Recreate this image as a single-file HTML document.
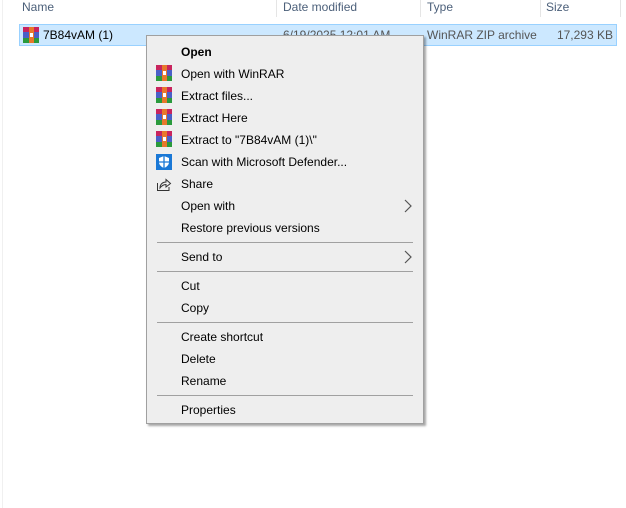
<!DOCTYPE html>
<html><head><meta charset="utf-8"><style>
body{margin:0;width:626px;height:508px;background:#fff;position:relative;overflow:hidden;font-family:"Liberation Sans",sans-serif;font-size:12px;color:#000}
.a{position:absolute;white-space:nowrap}
.h{color:#4c607a;top:0}
.vs{position:absolute;top:0;width:1px;height:17px;background:#e5e5e5}
.rar{position:absolute;width:16px;height:16px}
.rar i{position:absolute;left:0;width:16px;display:block}
.menu{position:absolute;left:146px;top:35px;width:278px;height:389px;background:#eeeeee;border:1px solid #a0a0a0;box-shadow:2px 2px 2px rgba(0,0,0,.35);box-sizing:border-box}
.it{position:absolute;left:34px;white-space:nowrap;line-height:16px}
.sep{position:absolute;left:10px;width:256px;height:1px;background:#a0a0a0}
.arr{position:absolute;left:256px}
</style></head><body>
<div style="position:absolute;left:2px;top:0;width:1px;height:508px;background:#f0f0f0"></div>
<div class="a h" style="left:22px">Name</div>
<div class="vs" style="left:276px"></div>
<div class="a h" style="left:283px">Date modified</div>
<div class="vs" style="left:420px"></div>
<div class="a h" style="left:427px">Type</div>
<div class="vs" style="left:540px"></div>
<div class="a h" style="left:546px">Size</div>
<div class="vs" style="left:620px"></div>
<div style="position:absolute;left:19px;top:24px;width:598px;height:22px;background:#cce8ff;border:1px solid #99d1ff;box-sizing:border-box"></div>
<div class="rar" style="left:23px;top:27px"><i style="top:0;height:5px;background:#c8245e"></i><i style="top:5px;height:6px;background:#4a5fc7"></i><i style="top:11px;height:5px;background:#2a9a3c"></i><i style="left:6px;width:5px;top:0;height:16px;background:#e8782c"></i><i style="left:7px;width:3px;top:6px;height:4px;background:#fff"></i></div>
<div class="a" style="left:43px;top:28px">7B84vAM (1)</div>
<div class="a" style="left:283px;top:28px;color:#555">6/19/2025 12:01 AM</div>
<div class="a" style="left:427px;top:28px;color:#555">WinRAR ZIP archive</div>
<div class="a" style="right:13px;top:28px;color:#555">17,293 KB</div>
<div class="menu">
<div class="it" style="top:8px;font-weight:bold">Open</div>
<div class="it" style="top:30px">Open with WinRAR</div>
<div class="it" style="top:52px">Extract files...</div>
<div class="it" style="top:74px">Extract Here</div>
<div class="it" style="top:96px">Extract to "7B84vAM (1)\"</div>
<div class="it" style="top:118px">Scan with Microsoft Defender...</div>
<div class="it" style="top:140px">Share</div>
<div class="it" style="top:162px">Open with</div>
<div class="it" style="top:184px">Restore previous versions</div>
<div class="sep" style="top:206px"></div>
<div class="it" style="top:213px">Send to</div>
<div class="sep" style="top:235px"></div>
<div class="it" style="top:242px">Cut</div>
<div class="it" style="top:264px">Copy</div>
<div class="sep" style="top:286px"></div>
<div class="it" style="top:293px">Create shortcut</div>
<div class="it" style="top:315px">Delete</div>
<div class="it" style="top:337px">Rename</div>
<div class="sep" style="top:359px"></div>
<div class="it" style="top:366px">Properties</div>
<svg class="arr" style="top:163px" width="10" height="14"><path d="M2 1L8 7L2 13" fill="none" stroke="#555" stroke-width="1.2"/></svg>
<svg class="arr" style="top:214px" width="10" height="14"><path d="M2 1L8 7L2 13" fill="none" stroke="#555" stroke-width="1.2"/></svg>
<svg style="position:absolute;left:9px;top:118px" width="16" height="16"><rect width="16" height="16" fill="#1a78d6"/><path d="M8 2L13 4V8C13 11 10.5 13 8 14C5.5 13 3 11 3 8V4Z" fill="#fff"/><path d="M8 2V14M3 8H13" stroke="#1a78d6" stroke-width="1.3"/></svg>
<svg style="position:absolute;left:9px;top:140px" width="16" height="16"><path d="M1.5 7V14.5H13V11" fill="none" stroke="#333" stroke-width="1"/><path d="M4 12C4 8 7 6 10 6V3.5L14.5 7.5L10 11V8.5C7.5 8.5 5.5 10 4 12Z" fill="none" stroke="#333" stroke-width="1"/></svg>
</div>
<div id="icons"></div>
<script>
var ys=[65,87,109,131];var h='';ys.forEach(function(y){h+='<div class="rar" style="left:156px;top:'+y+'px"><i style="top:0;height:5px;background:#c8245e"></i><i style="top:5px;height:6px;background:#4a5fc7"></i><i style="top:11px;height:5px;background:#2a9a3c"></i><i style="left:6px;width:5px;top:0;height:16px;background:#e8782c"></i><i style="left:7px;width:3px;top:6px;height:4px;background:#fff"></i></div>';});document.getElementById('icons').innerHTML=h;
</script>
</body></html>
